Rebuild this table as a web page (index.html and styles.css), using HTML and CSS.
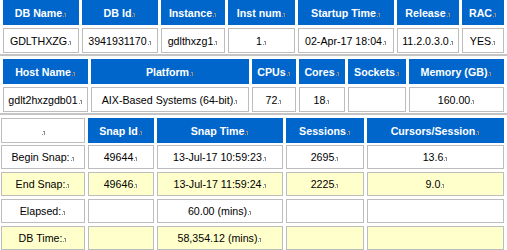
FILE: index.html
```html
<!DOCTYPE html>
<html lang="en">
<head>
<meta charset="utf-8">
<title>AWR Report Header</title>
<link rel="stylesheet" href="styles.css">
</head>
<body>
<section class="block block-db">
  <div class="grid cols-db">
    <div class="cell hd"><span class="t">DB Name</span></div>
    <div class="cell hd"><span class="t">DB Id</span></div>
    <div class="cell hd"><span class="t">Instance</span></div>
    <div class="cell hd"><span class="t">Inst num</span></div>
    <div class="cell hd"><span class="t">Startup Time</span></div>
    <div class="cell hd"><span class="t">Release</span></div>
    <div class="cell hd"><span class="t">RAC</span></div>

    <div class="cell"><span class="t">GDLTHXZG</span></div>
    <div class="cell"><span class="t">3941931170</span></div>
    <div class="cell"><span class="t">gdlthxzg1</span></div>
    <div class="cell"><span class="t">1</span></div>
    <div class="cell"><span class="t">02-Apr-17 18:04</span></div>
    <div class="cell"><span class="t">11.2.0.3.0</span></div>
    <div class="cell"><span class="t">YES</span></div>
  </div>
</section>

<section class="block block-host">
  <div class="grid cols-host">
    <div class="cell hd"><span class="t">Host Name</span></div>
    <div class="cell hd"><span class="t">Platform</span></div>
    <div class="cell hd"><span class="t">CPUs</span></div>
    <div class="cell hd"><span class="t">Cores</span></div>
    <div class="cell hd"><span class="t">Sockets</span></div>
    <div class="cell hd"><span class="t">Memory (GB)</span></div>

    <div class="cell"><span class="t">gdlt2hxzgdb01</span></div>
    <div class="cell"><span class="t">AIX-Based Systems (64-bit)</span></div>
    <div class="cell"><span class="t">72</span></div>
    <div class="cell"><span class="t">18</span></div>
    <div class="cell"></div>
    <div class="cell"><span class="t">160.00</span></div>
  </div>
</section>

<section class="block block-snap">
  <div class="grid cols-snap">
    <div class="cell hrow"><span class="t"></span></div>
    <div class="cell hd hrow"><span class="t">Snap Id</span></div>
    <div class="cell hd hrow"><span class="t">Snap Time</span></div>
    <div class="cell hd hrow"><span class="t">Sessions</span></div>
    <div class="cell hd hrow"><span class="t">Cursors/Session</span></div>

    <div class="cell"><span class="t">Begin Snap:</span></div>
    <div class="cell"><span class="t">49644</span></div>
    <div class="cell"><span class="t">13-Jul-17 10:59:23</span></div>
    <div class="cell"><span class="t">2695</span></div>
    <div class="cell"><span class="t">13.6</span></div>

    <div class="cell alt"><span class="t">End Snap:</span></div>
    <div class="cell alt"><span class="t">49646</span></div>
    <div class="cell alt"><span class="t">13-Jul-17 11:59:24</span></div>
    <div class="cell alt"><span class="t">2225</span></div>
    <div class="cell alt"><span class="t">9.0</span></div>

    <div class="cell"><span class="t">Elapsed:</span></div>
    <div class="cell"></div>
    <div class="cell"><span class="t">60.00 (mins)</span></div>
    <div class="cell"></div>
    <div class="cell"></div>

    <div class="cell alt"><span class="t">DB Time:</span></div>
    <div class="cell alt"></div>
    <div class="cell alt"><span class="t">58,354.12 (mins)</span></div>
    <div class="cell alt"></div>
    <div class="cell alt"></div>
  </div>
</section>
</body>
</html>
```
FILE: styles.css
```css
html, body {
  margin: 0;
  padding: 0;
  background: #ffffff;
}

body {
  font-family: "Liberation Sans", Arial, sans-serif;
  font-size: 10.67px;
  color: #000000;
  width: 507px;
  overflow: hidden;
}

.block {
  padding: 3px 0 1px 3px;
  border-bottom: 2px solid #c4c4c4;
}

.block-db {
  padding-top: 0;
}

.block-snap {
  padding-left: 1px;
  border-bottom: none;
}

.grid {
  display: grid;
  gap: 3px;
  grid-auto-rows: 25px;
}

.cols-db {
  grid-template-columns: 76px 76px 64px 67px 96px 62px 42px;
}

.cols-host {
  grid-template-columns: 85px 158px 44px 46px 58px 95px;
}

.cols-snap {
  grid-template-columns: 84px 66px 126px 78px 137px;
  grid-auto-rows: 24px;
}

.cols-snap .hrow {
  height: 25px;
}

.cell {
  box-sizing: border-box;
  display: flex;
  align-items: center;
  justify-content: center;
  border: 1px solid #bdbdbd;
  background: #ffffff;
  white-space: nowrap;
  overflow: hidden;
}

.cell.alt {
  background: #ffffcc;
}

.cell.hd {
  background: #0066cc;
  border-color: #0066cc;
  color: #ffffff;
  font-weight: bold;
}

.t::after {
  content: "";
  display: inline-block;
  width: 4px;
  height: 4px;
  margin-left: 1px;
  background:
    linear-gradient(#8a8a8a, #8a8a8a) 0 3px / 1px 1px no-repeat,
    linear-gradient(#8a8a8a, #8a8a8a) 2px 0 / 1px 4px no-repeat,
    linear-gradient(#8a8a8a, #8a8a8a) 1px 0 / 1px 1px no-repeat;
}

.hd .t::after {
  background:
    linear-gradient(#9a8f7a, #9a8f7a) 0 3px / 1px 1px no-repeat,
    linear-gradient(#9a8f7a, #9a8f7a) 2px 0 / 1px 4px no-repeat,
    linear-gradient(#9a8f7a, #9a8f7a) 1px 0 / 1px 1px no-repeat;
}
```
